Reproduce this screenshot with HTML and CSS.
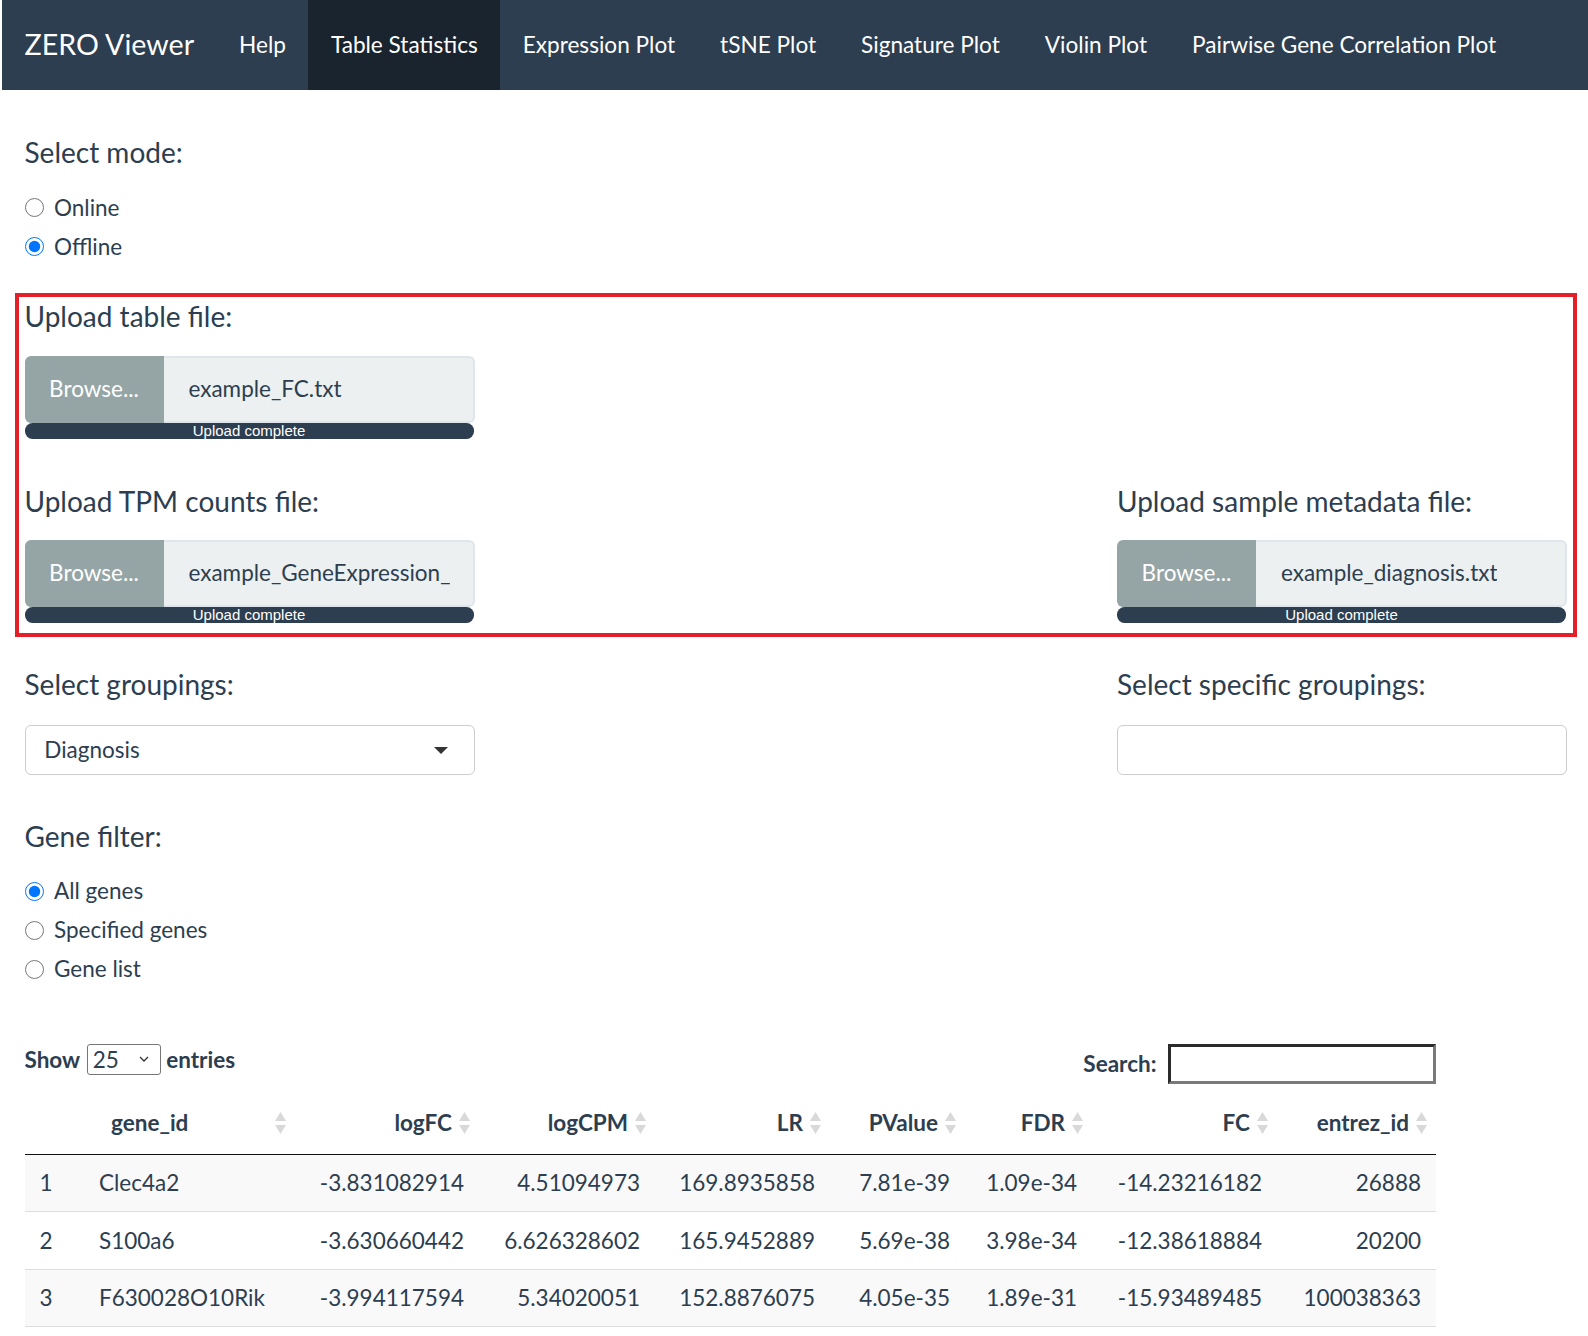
FILE: index.html
```html
<!DOCTYPE html>
<html lang="en">
<head>
<meta charset="utf-8">
<title>ZERO Viewer</title>
<link rel="stylesheet" href="styles.css">
</head>
<body>
<div class="page">
  <nav class="navbar">
    <span class="brand">ZERO Viewer</span>
    <ul class="nav">
      <li><a>Help</a></li>
      <li class="active"><a>Table Statistics</a></li>
      <li><a>Expression Plot</a></li>
      <li><a>tSNE Plot</a></li>
      <li><a>Signature Plot</a></li>
      <li><a>Violin Plot</a></li>
      <li><a>Pairwise Gene Correlation Plot</a></li>
    </ul>
  </nav>

  <main class="content">
    <section class="block block-mode">
      <div class="label">Select mode:</div>
      <div class="radios">
        <label class="radio"><input type="radio" name="mode"><span>Online</span></label>
        <label class="radio"><input type="radio" name="mode" checked><span>Offline</span></label>
      </div>
    </section>

    <section class="block block-upload">
      <div class="label">Upload table file:</div>
      <div class="file">
        <span class="browse">Browse...</span>
        <span class="filename"><span class="fname">example_FC.txt</span></span>
      </div>
      <div class="progress">Upload complete</div>
    </section>

    <section class="block cols">
      <div class="col">
        <div class="label">Upload TPM counts file:</div>
        <div class="file">
          <span class="browse">Browse...</span>
          <span class="filename"><span class="fname">example_GeneExpression_</span></span>
        </div>
        <div class="progress">Upload complete</div>
      </div>
      <div class="col">
        <div class="label">Upload sample metadata file:</div>
        <div class="file">
          <span class="browse">Browse...</span>
          <span class="filename"><span class="fname">example_diagnosis.txt</span></span>
        </div>
        <div class="progress">Upload complete</div>
      </div>
    </section>

    <section class="block cols">
      <div class="col">
        <div class="label label-group">Select groupings:</div>
        <div class="selectize"><span>Diagnosis</span><span class="caret"></span></div>
      </div>
      <div class="col">
        <div class="label label-group">Select specific groupings:</div>
        <div class="selectize"></div>
      </div>
    </section>

    <section class="block block-filter">
      <div class="label">Gene filter:</div>
      <div class="radios">
        <label class="radio"><input type="radio" name="filter" checked><span>All genes</span></label>
        <label class="radio"><input type="radio" name="filter"><span>Specified genes</span></label>
        <label class="radio"><input type="radio" name="filter"><span>Gene list</span></label>
      </div>
    </section>

    <section class="dt">
      <div class="dt-top">
        <div class="length">
          <span>Show</span>
          <span class="len-select"><span>25</span>
            <svg class="chev" width="10" height="7" viewBox="0 0 10 7"><polyline points="1,1 5,5 9,1" fill="none" stroke="#333" stroke-width="1.3"/></svg>
          </span>
          <span>entries</span>
        </div>
        <div class="search">
          <span>Search:</span>
          <span class="search-input"></span>
        </div>
      </div>
      <table class="grid">
        <colgroup>
          <col class="c0"><col class="c1"><col class="c2"><col class="c3"><col class="c4"><col class="c5"><col class="c6"><col class="c7"><col class="c8">
        </colgroup>
        <thead>
          <tr>
            <th class="rn"></th>
            <th>gene_id<svg class="sort" width="11" height="22" viewBox="0 0 11 22"><path d="M5.5 0 L11 9 L0 9 Z M0 13 L11 13 L5.5 22 Z" fill="#d9d9d9"/></svg></th>
            <th class="r">logFC<svg class="sort" width="11" height="22" viewBox="0 0 11 22"><path d="M5.5 0 L11 9 L0 9 Z M0 13 L11 13 L5.5 22 Z" fill="#d9d9d9"/></svg></th>
            <th class="r">logCPM<svg class="sort" width="11" height="22" viewBox="0 0 11 22"><path d="M5.5 0 L11 9 L0 9 Z M0 13 L11 13 L5.5 22 Z" fill="#d9d9d9"/></svg></th>
            <th class="r">LR<svg class="sort" width="11" height="22" viewBox="0 0 11 22"><path d="M5.5 0 L11 9 L0 9 Z M0 13 L11 13 L5.5 22 Z" fill="#d9d9d9"/></svg></th>
            <th class="r">PValue<svg class="sort" width="11" height="22" viewBox="0 0 11 22"><path d="M5.5 0 L11 9 L0 9 Z M0 13 L11 13 L5.5 22 Z" fill="#d9d9d9"/></svg></th>
            <th class="r">FDR<svg class="sort" width="11" height="22" viewBox="0 0 11 22"><path d="M5.5 0 L11 9 L0 9 Z M0 13 L11 13 L5.5 22 Z" fill="#d9d9d9"/></svg></th>
            <th class="r">FC<svg class="sort" width="11" height="22" viewBox="0 0 11 22"><path d="M5.5 0 L11 9 L0 9 Z M0 13 L11 13 L5.5 22 Z" fill="#d9d9d9"/></svg></th>
            <th class="r">entrez_id<svg class="sort" width="11" height="22" viewBox="0 0 11 22"><path d="M5.5 0 L11 9 L0 9 Z M0 13 L11 13 L5.5 22 Z" fill="#d9d9d9"/></svg></th>
          </tr>
        </thead>
        <tbody>
          <tr>
            <td>1</td><td>Clec4a2</td><td class="r">-3.831082914</td><td class="r">4.51094973</td><td class="r">169.8935858</td><td class="r">7.81e-39</td><td class="r">1.09e-34</td><td class="r">-14.23216182</td><td class="r">26888</td>
          </tr>
          <tr>
            <td>2</td><td>S100a6</td><td class="r">-3.630660442</td><td class="r">6.626328602</td><td class="r">165.9452889</td><td class="r">5.69e-38</td><td class="r">3.98e-34</td><td class="r">-12.38618884</td><td class="r">20200</td>
          </tr>
          <tr>
            <td>3</td><td>F630028O10Rik</td><td class="r">-3.994117594</td><td class="r">5.34020051</td><td class="r">152.8876075</td><td class="r">4.05e-35</td><td class="r">1.89e-31</td><td class="r">-15.93489485</td><td class="r">100038363</td>
          </tr>
        </tbody>
      </table>
    </section>
  </main>

  <div class="highlight"></div>
</div>
</body>
</html>
```

FILE: styles.css
```css
* { box-sizing: border-box; }

html, body {
  margin: 0;
  padding: 0;
  background: #ffffff;
}

body {
  font-family: Lato, "Noto Sans", sans-serif;
  font-size: 22.5px;
  line-height: 32px;
  color: #2c3e50;
}

.page {
  position: relative;
  margin-left: 2px;
}

/* ---------- navbar ---------- */
.navbar {
  display: flex;
  height: 90px;
  background: #2c3e50;
}

.brand {
  padding: 0 22.5px;
  font-size: 28.6px;
  line-height: 88px;
  color: #ffffff;
  white-space: nowrap;
}

.nav {
  display: flex;
  list-style: none;
  margin: 0;
  padding: 0;
}

.nav a {
  display: block;
  padding: 0 22.5px;
  line-height: 90px;
  font-size: 22.6px;
  color: #ffffff;
  white-space: nowrap;
}

.nav .active a {
  background: #1a242f;
}

/* ---------- content ---------- */
.content {
  padding: 44.5px 21px 40px 22.5px;
}

.label {
  font-size: 28px;
  line-height: 34px;
  margin-bottom: 23px;
  white-space: nowrap;
}

.block-mode .label { margin-bottom: 23px; }
.block-mode { margin-bottom: 36px; }

.radios {
  display: flex;
  flex-direction: column;
  gap: 7px;
}

.radio {
  display: flex;
  align-items: center;
  height: 32px;
  gap: 10.5px;
}

.radio input {
  width: 19px;
  height: 19px;
  margin: 0;
}

.block-upload { margin-bottom: 45px; }

.cols {
  display: flex;
  justify-content: space-between;
  margin-bottom: 44px;
}

.cols .label { margin-bottom: 22px; }
.cols .label-group { margin-bottom: 24.5px; }

.col { width: 450px; }

/* file input */
.file {
  display: flex;
  width: 450px;
  height: 67.5px;
}

.browse {
  width: 139px;
  flex: none;
  display: flex;
  align-items: center;
  justify-content: center;
  background: #95a5a6;
  color: #ffffff;
  border-radius: 6px 0 0 6px;
}

.filename {
  flex: 1;
  display: flex;
  align-items: center;
  padding: 0 22.5px 0 25px;
  background: #ecf0f1;
  border: 2px solid #dfe5ec;
  border-left: none;
  border-radius: 0 6px 6px 0;
  overflow: hidden;
}

.fname {
  white-space: nowrap;
  overflow: hidden;
}

.progress {
  width: 449px;
  height: 15.5px;
  background: #2c3e50;
  border-radius: 7.5px;
  color: #ffffff;
  font-family: "Liberation Sans", Arial, sans-serif;
  font-size: 15px;
  line-height: 15.5px;
  text-align: center;
}

/* selectize */
.selectize {
  width: 450px;
  height: 50px;
  display: flex;
  align-items: center;
  justify-content: space-between;
  padding: 0 25.8px 0 18.8px;
  border: 1px solid #cccccc;
  border-radius: 6px;
  background: #ffffff;
  color: #2c3e50;
}

.caret {
  width: 0;
  height: 0;
  border-left: 7.5px solid transparent;
  border-right: 7.5px solid transparent;
  border-top: 7.5px solid #333333;
}

.block-filter { margin-bottom: 59px; }
.block-filter .label { margin-bottom: 22px; }

/* ---------- data table ---------- */
.dt { width: 1411.5px; }

.dt-top {
  display: flex;
  justify-content: space-between;
  align-items: flex-start;
  height: 40px;
  margin-bottom: 7.5px;
  font-weight: 700;
}

.length {
  display: flex;
  align-items: center;
  height: 31px;
}

.len-select {
  display: flex;
  align-items: center;
  justify-content: space-between;
  width: 74px;
  height: 31px;
  margin: 0 5.5px 0 6.5px;
  padding: 0 11px 0 5px;
  border: 1px solid #767676;
  border-radius: 3px;
  font-weight: 400;
  line-height: 29px;
}

.search {
  display: flex;
  align-items: center;
  height: 40px;
}

.search-input {
  width: 268px;
  height: 40px;
  margin-left: 11.5px;
  border: 3px solid;
  border-color: #2b2b2b #7a7a7a #7a7a7a #2b2b2b;
  background: #ffffff;
}

.grid {
  width: 1411.5px;
  border-collapse: collapse;
  table-layout: fixed;
}

.c0 { width: 59.5px; }
.c1 { width: 211px; }
.c2 { width: 184px; }
.c3 { width: 176px; }
.c4 { width: 175px; }
.c5 { width: 135px; }
.c6 { width: 127px; }
.c7 { width: 185px; }
.c8 { width: 159px; }

.grid th {
  position: relative;
  padding: 15px 27px;
  line-height: 32px;
  font-weight: 700;
  text-align: left;
  border-bottom: 1px solid #111111;
  white-space: nowrap;
}

.grid th.rn { padding: 15px 0; }

.grid th.r { text-align: right; }

.sort {
  position: absolute;
  right: 9px;
  top: 50%;
  transform: translateY(-50%);
}

.grid td {
  padding: 12.5px 15px 12px;
  line-height: 32px;
  border-top: 1px solid #dddddd;
  white-space: nowrap;
}

.grid tbody tr:first-child td { border-top: none; }
.grid tbody tr:last-child td { border-bottom: 1px solid #dddddd; }

.grid tbody tr:nth-child(odd) { background: #f9f9f9; }

.grid td.r { text-align: right; }

/* annotation overlay */
.highlight {
  position: absolute;
  left: 13px;
  top: 293px;
  width: 1562px;
  height: 344px;
  border: 4.5px solid #e31f29;
  pointer-events: none;
}
```
